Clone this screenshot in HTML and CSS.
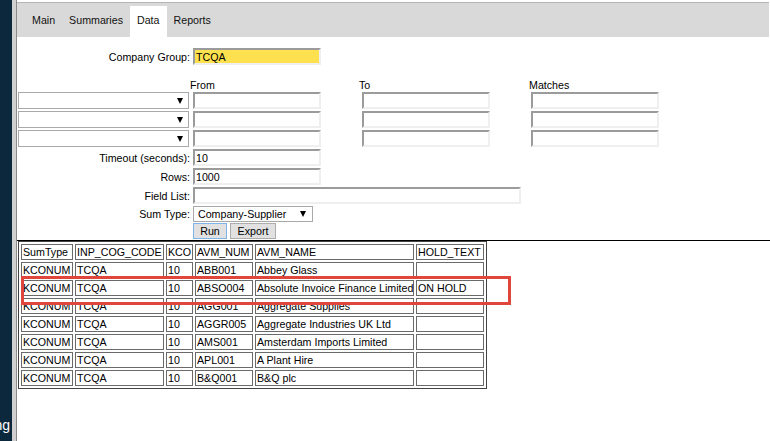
FILE: index.html
```html
<!DOCTYPE html>
<html>
<head>
<meta charset="utf-8">
<title>Data</title>
<link rel="stylesheet" href="styles.css">
</head>
<body>
<div class="app">
  <aside class="sidebar"><span class="sidebar-label">Testing</span></aside>
  <div class="gutter"></div>
  <main class="main">
    <nav class="tabs">
      <span class="tab">Main</span>
      <span class="tab">Summaries</span>
      <span class="tab active">Data</span>
      <span class="tab">Reports</span>
    </nav>
    <form class="form">
      <div class="row row-company">
        <label class="lbl">Company Group:</label>
        <input class="inp inp-yellow" value="TCQA">
      </div>
      <div class="row row-head">
        <span></span>
        <span class="hd">From</span>
        <span class="hd">To</span>
        <span class="hd hd-m">Matches</span>
      </div>
      <div class="row row-filter">
        <div class="sel sel-wide"><span></span><span class="arrow"></span></div>
        <input class="inp"><input class="inp"><input class="inp">
      </div>
      <div class="row">
        <div class="sel sel-wide"><span></span><span class="arrow"></span></div>
        <input class="inp"><input class="inp"><input class="inp">
      </div>
      <div class="row">
        <div class="sel sel-wide"><span></span><span class="arrow"></span></div>
        <input class="inp"><input class="inp"><input class="inp">
      </div>
      <div class="row">
        <label class="lbl">Timeout (seconds):</label>
        <input class="inp" value="10">
      </div>
      <div class="row">
        <label class="lbl">Rows:</label>
        <input class="inp" value="1000">
      </div>
      <div class="row">
        <label class="lbl">Field List:</label>
        <input class="inp inp-long">
      </div>
      <div class="row row-sum">
        <label class="lbl">Sum Type:</label>
        <div class="sel sel-sum"><span class="sel-text">Company-Supplier</span><span class="arrow"></span></div>
      </div>
      <div class="row row-btn">
        <span></span>
        <div class="btns">
          <button type="button" class="btn btn-focus">Run</button>
          <button type="button" class="btn btn-export">Export</button>
        </div>
      </div>
    </form>
    <table class="grid">
      <colgroup>
        <col class="c1"><col class="c2"><col class="c3"><col class="c4"><col class="c5"><col class="c6">
      </colgroup>
      <tr><td>SumType</td><td>INP_COG_CODE</td><td>KCO</td><td>AVM_NUM</td><td>AVM_NAME</td><td>HOLD_TEXT</td></tr>
      <tr><td>KCONUM</td><td>TCQA</td><td>10</td><td>ABB001</td><td>Abbey Glass</td><td></td></tr>
      <tr><td>KCONUM</td><td>TCQA</td><td>10</td><td>ABSO004</td><td>Absolute Invoice Finance Limited</td><td>ON HOLD</td></tr>
      <tr><td>KCONUM</td><td>TCQA</td><td>10</td><td>AGG001</td><td>Aggregate Supplies</td><td></td></tr>
      <tr><td>KCONUM</td><td>TCQA</td><td>10</td><td>AGGR005</td><td>Aggregate Industries UK Ltd</td><td></td></tr>
      <tr><td>KCONUM</td><td>TCQA</td><td>10</td><td>AMS001</td><td>Amsterdam Imports Limited</td><td></td></tr>
      <tr><td>KCONUM</td><td>TCQA</td><td>10</td><td>APL001</td><td>A Plant Hire</td><td></td></tr>
      <tr><td>KCONUM</td><td>TCQA</td><td>10</td><td>B&amp;Q001</td><td>B&amp;Q plc</td><td></td></tr>
    </table>
    <div class="highlight"></div>
  </main>
</div>
</body>
</html>
```
FILE: styles.css
```css
* { box-sizing: border-box; }
html, body { margin: 0; height: 100%; overflow: hidden; background: #fff; }
body { font: 8pt "Liberation Sans", Arial, sans-serif; color: #000; }

.app { display: flex; height: 441px; }

.sidebar {
  width: 12px; flex: none; background: #0b283c;
  display: flex; flex-direction: column; justify-content: flex-end; align-items: flex-end;
  overflow: hidden; padding: 0 2px 8px 0;
}
.sidebar-label { color: #fff; font-size: 14px; line-height: 16px; white-space: nowrap; }

.gutter { width: 4px; flex: none; background: #d0d0d0; }

.main { flex: 1; min-width: 0; position: relative; border-left: 1px solid #8a8a8a; }

.tabs {
  display: flex; align-items: flex-end; height: 35px;
  margin: 2px 1px 0 0; padding-left: 8px;
  border-top: 1px solid #b5b5b5; background: #d9d9d9;
}
.tab { height: 31px; padding: 8px 7px 0; line-height: 13px; color: #111; }
.tab.active { background: #fff; }

.form { padding: 11px 0 1px 1px; border-bottom: 1px solid #000; }
.row {
  display: grid; grid-template-columns: 175px 169px 169px 128px;
  height: 17px; align-items: center; margin-top: 2px;
}
.row-company { margin-top: 0; }
.row-head { height: 13px; margin-top: 14px; align-items: start; line-height: 13px; }
.row-filter { margin-top: 0; }
.row-sum { height: 16px; }
.row-btn { height: 16px; margin-top: 1px; }

.lbl { text-align: right; padding-right: 3px; white-space: nowrap; }
.hd { margin-left: -3px; }
.hd-m { margin-left: -2px; }

.inp {
  width: 128px; height: 17px; margin: 0; padding: 0 1px;
  font: inherit; color: #000; background: #fff; outline: none;
  border-style: solid; border-width: 2px;
  border-color: #9b9b9b #efefef #efefef #9b9b9b;
}
.inp-yellow { background: #ffe14f; }
.inp-long { width: 328px; grid-column: 2 / span 3; }

.sel {
  display: flex; align-items: center; justify-content: space-between;
  height: 17px; border: 1px solid #a9a9a9; background: #fff;
}
.sel-wide { width: 171px; padding-right: 5px; }
.sel-sum { width: 120px; height: 16px; padding: 0 6px 0 4px; }
.sel-text { white-space: nowrap; }
.arrow {
  width: 0; height: 0;
  border-left: 3.5px solid transparent; border-right: 3.5px solid transparent;
  border-top: 6px solid #000;
}

.btns { display: flex; gap: 3px; height: 16px; }
.btn {
  height: 16px; margin: 0; padding: 0; font: inherit; color: #000;
  background: #e1e1e1; border: 1px solid #adadad; line-height: 13px;
}
.btn-focus { width: 34px; border-color: #7eb4ea; }
.btn-export { width: 46px; }

.grid {
  margin-left: 1px; width: 469px; table-layout: fixed;
  border-collapse: separate; border-spacing: 2px; border: 1px solid #444;
}
.c1 { width: 52px; } .c2 { width: 89px; } .c3 { width: 27px; }
.c4 { width: 58px; } .c5 { width: 159px; } .c6 { width: 68px; }
.grid td {
  height: 16px; padding: 1px; line-height: 12px;
  border: 1px solid #6a6a6a; white-space: nowrap; overflow: hidden;
}

.highlight {
  position: absolute; left: 4px; top: 276px; width: 490px; height: 29px;
  border: 3px solid #e0463c; pointer-events: none;
}
```
